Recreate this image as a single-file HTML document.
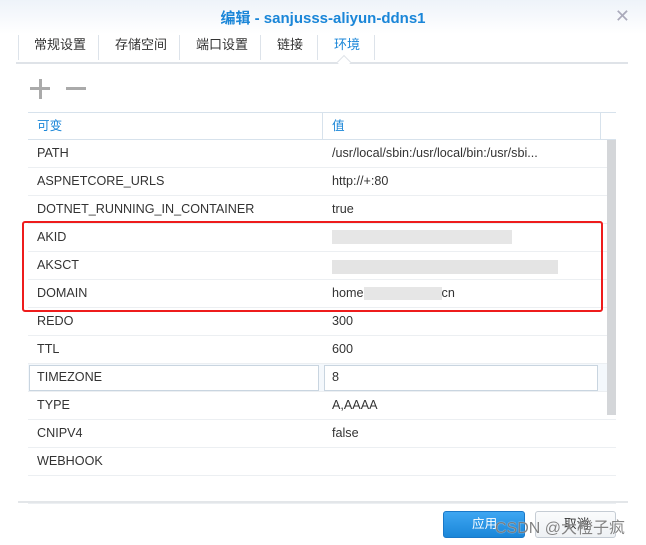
<!DOCTYPE html>
<html><head><meta charset="utf-8"><style>
*{margin:0;padding:0;box-sizing:border-box}
body{width:646px;height:545px;background:#fff;font-family:"Liberation Sans","Noto Sans CJK SC",sans-serif;font-size:12.6px;color:#333;position:relative;overflow:hidden}
.top{position:absolute;left:0;top:0;width:646px;height:34px;background:linear-gradient(#eef3f9,#fff)}
.title{position:absolute;top:7px;left:0;width:646px;text-align:center;color:#1a86d8;font-size:15px;font-weight:bold}
.x{position:absolute;right:16px;top:6px;color:#aab;font-size:18px}
.tab{position:absolute;top:35px;height:24px;line-height:20px;font-size:13px;color:#333}
.sep{position:absolute;top:35px;width:1px;height:25px;background:#dde3ea}
.r{position:absolute;left:28px;width:588px;height:28px;border-bottom:1px solid #eceff2;line-height:27px}
.r span{position:absolute;left:9px}
.r b{position:absolute;left:304px;font-weight:normal}
</style></head><body>
<div class="top"></div>
<div class="title">编辑 - sanjusss-aliyun-ddns1</div>
<div class="x">✕</div>
<div class="sep" style="left:18px"></div><div class="sep" style="left:98px"></div><div class="sep" style="left:179px"></div><div class="sep" style="left:260px"></div><div class="sep" style="left:317px"></div><div class="sep" style="left:374px"></div>
<div class="tab" style="left:34px">常规设置</div>
<div class="tab" style="left:115px">存储空间</div>
<div class="tab" style="left:196px">端口设置</div>
<div class="tab" style="left:277px">链接</div>
<div class="tab" style="left:334px;color:#1a86d8">环境</div>
<div style="position:absolute;left:16px;top:62px;width:612px;height:2px;background:#dfe3e8"></div>
<div style="position:absolute;left:339px;top:57px;width:10px;height:10px;background:#fff;border-left:1px solid #dfe3e8;border-top:1px solid #dfe3e8;transform:rotate(45deg)"></div>
<div style="position:absolute;left:30px;top:87px;width:20px;height:3px;background:#aaa"></div>
<div style="position:absolute;left:38.5px;top:79px;width:3px;height:20px;background:#aaa"></div>
<div style="position:absolute;left:66px;top:87px;width:20px;height:3px;background:#aaa"></div>
<div style="position:absolute;left:28px;top:112px;width:588px;height:28px;border-top:1px solid #d7e2ec;border-bottom:1px solid #d7e2ec;color:#1a86d8;line-height:26px">
<span style="position:absolute;left:9px">可变</span><div style="position:absolute;left:294px;top:0;width:1px;height:26px;background:#d7e2ec"></div><span style="position:absolute;left:304px">值</span><div style="position:absolute;left:572px;top:0;width:1px;height:26px;background:#d7e2ec"></div></div>
<div class="r" style="top:140px"><span>PATH</span><b>/usr/local/sbin:/usr/local/bin:/usr/sbi...</b></div>
<div class="r" style="top:168px"><span>ASPNETCORE_URLS</span><b>http://+:80</b></div>
<div class="r" style="top:196px"><span>DOTNET_RUNNING_IN_CONTAINER</span><b>true</b></div>
<div class="r" style="top:224px"><span>AKID</span><b style="top:6px;width:180px;height:14px;background:#e6e6e6"></b></div>
<div class="r" style="top:252px"><span>AKSCT</span><b style="top:8px;width:226px;height:14px;background:#e4e4e4"></b></div>
<div class="r" style="top:280px"><span>DOMAIN</span><b>home<i style="display:inline-block;width:78px;height:13px;background:#e6e6e6;vertical-align:middle"></i>cn</b></div>
<div class="r" style="top:308px"><span>REDO</span><b>300</b></div>
<div class="r" style="top:336px"><span>TTL</span><b>600</b></div>
<div class="r" style="top:364px;background:#f4f8fc"><div style="position:absolute;left:1px;top:1px;width:290px;height:26px;border:1px solid #c9d5e0;background:#fff"></div><span>TIMEZONE</span><div style="position:absolute;left:296px;top:1px;width:274px;height:26px;border:1px solid #c9d5e0;background:#fff"></div><b>8</b></div>
<div class="r" style="top:392px"><span>TYPE</span><b>A,AAAA</b></div>
<div class="r" style="top:420px"><span>CNIPV4</span><b>false</b></div>
<div class="r" style="top:448px"><span>WEBHOOK</span></div>
<div class="r" style="top:476px"></div>
<div style="position:absolute;left:607px;top:140px;width:9px;height:275px;background:#d4d6d9"></div>
<div style="position:absolute;left:22px;top:221px;width:581px;height:91px;border:2px solid #ee1c1c;border-radius:3px"></div>
<div style="position:absolute;left:18px;top:501px;width:610px;height:2px;background:#e3e6e9"></div>
<div style="position:absolute;left:443px;top:511px;width:82px;height:27px;border-radius:3px;background:linear-gradient(#3ea6f2,#1a86d8);border:1px solid #1a78c8;color:#fff;line-height:25px;padding-left:28px">应用</div>
<div style="position:absolute;left:535px;top:511px;width:81px;height:27px;border-radius:3px;background:linear-gradient(#fafbfc,#eef1f4);border:1px solid #c5ccd4;line-height:25px;padding-left:28px">取消</div>
<div style="position:absolute;left:495px;top:514px;font-size:16px;color:rgba(90,90,90,.75);text-shadow:0 0 1px #fff">CSDN @大橙子疯</div>
</body></html>
